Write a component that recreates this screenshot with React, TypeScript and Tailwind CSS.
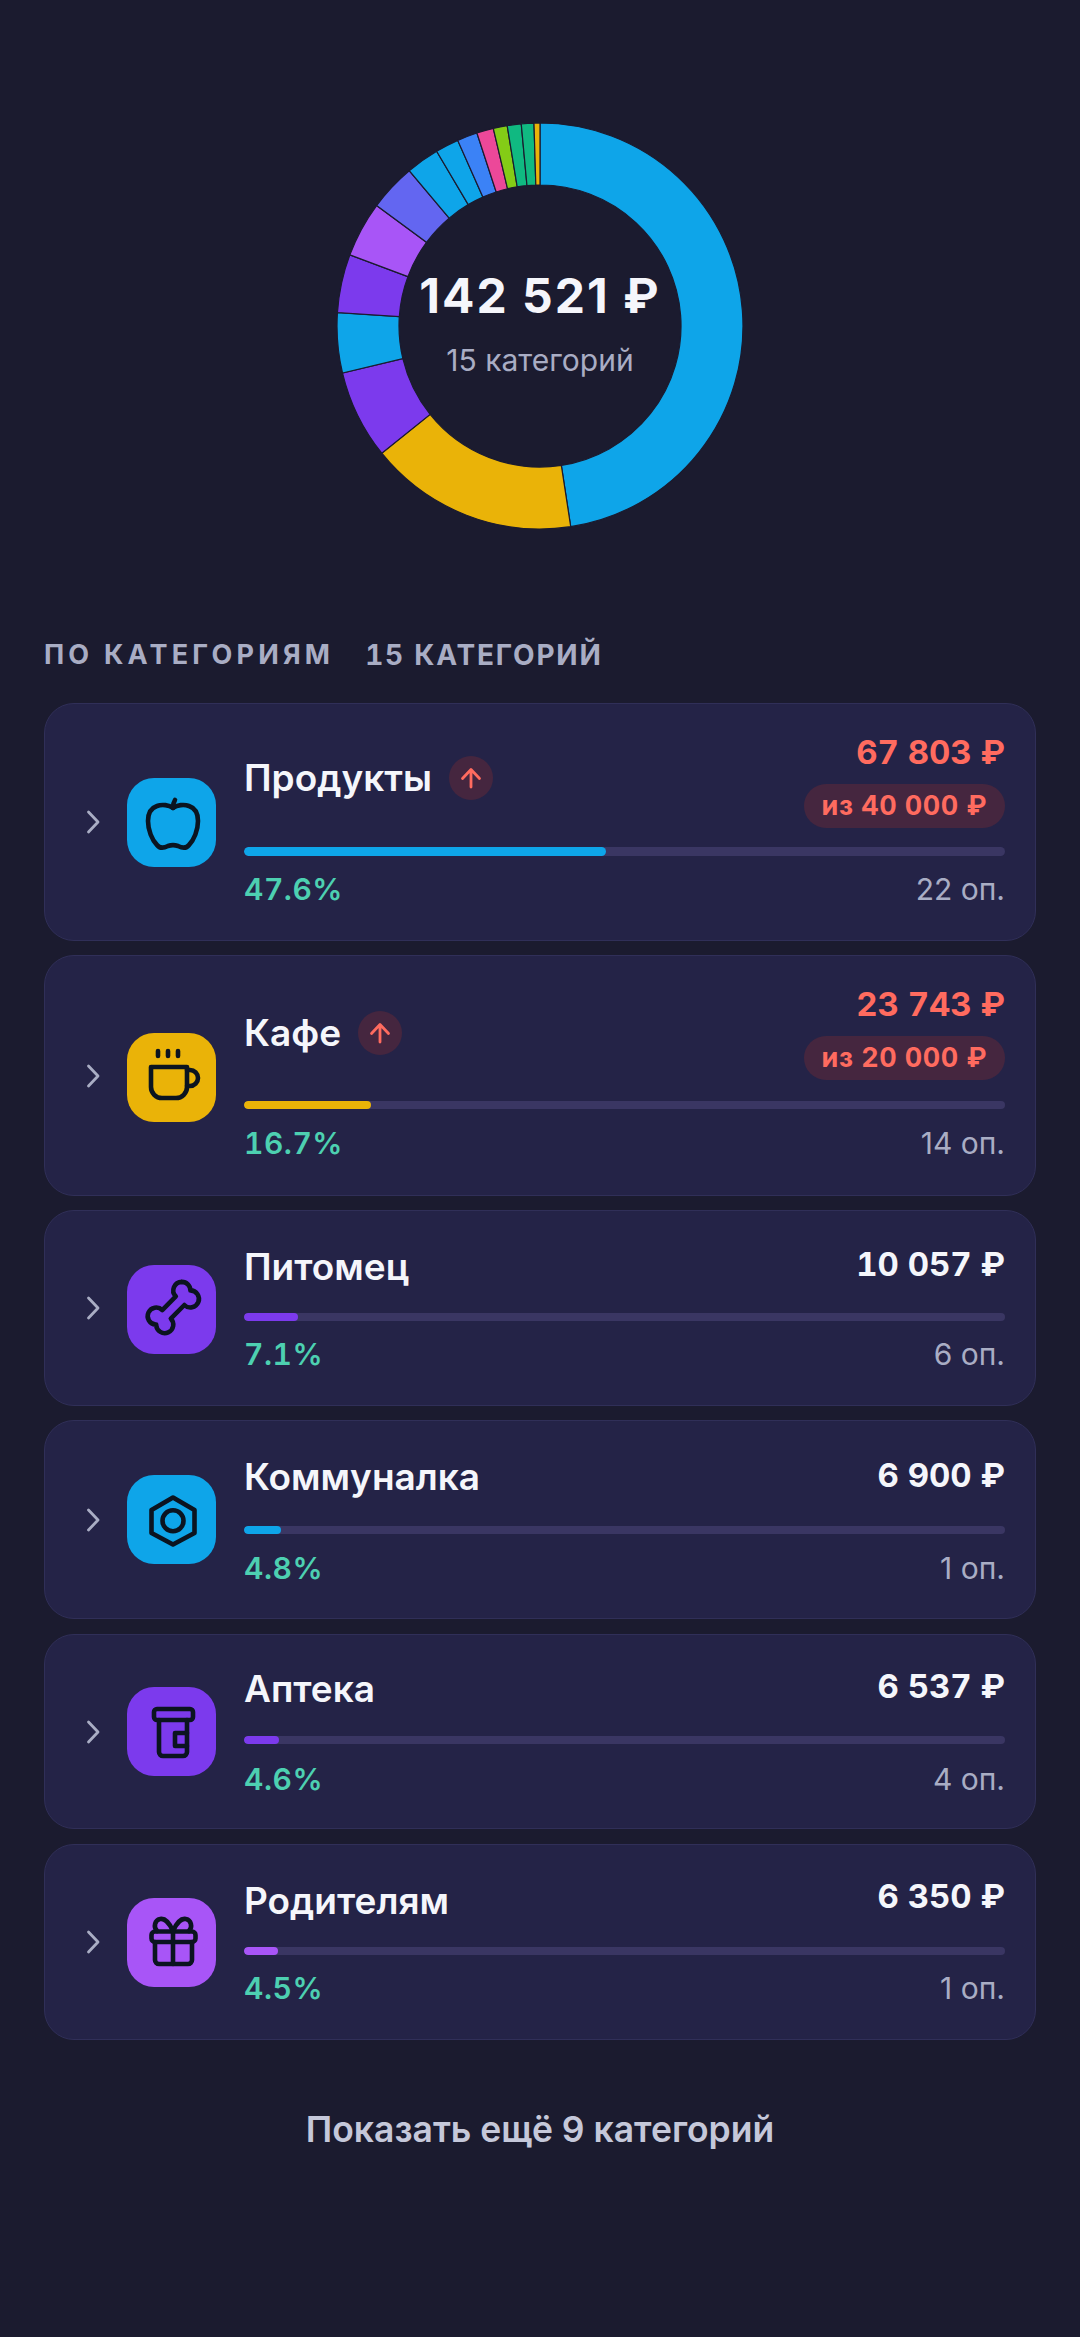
import React from "react";

const BG = "#1b1b2f";

const segs: [number, string][] = [
  [171.3, "#0ea5e9"],
  [231.2, "#eab308"],
  [256.6, "#7c3aed"],
  [273.8, "#0ea5e9"],
  [290.5, "#7c3aed"],
  [306.4, "#a855f7"],
  [319.9, "#6366f1"],
  [329.4, "#0ea5e9"],
  [336.1, "#0ea5e9"],
  [341.9, "#3b82f6"],
  [346.7, "#ec4899"],
  [350.7, "#84cc16"],
  [354.7, "#10b981"],
  [358.3, "#10b981"],
  [360, "#eab308"],
];

function arc(a0: number, a1: number, R: number, r: number, c: number) {
  const p = (a: number, q: number) => {
    const t = (a * Math.PI) / 180;
    return `${(c + q * Math.sin(t)).toFixed(2)} ${(c - q * Math.cos(t)).toFixed(2)}`;
  };
  const large = a1 - a0 > 180 ? 1 : 0;
  return `M${p(a0, R)} A${R} ${R} 0 ${large} 1 ${p(a1, R)} L${p(a1, r)} A${r} ${r} 0 ${large} 0 ${p(a0, r)} Z`;
}

function Donut() {
  let prev = 0;
  return (
    <svg width="406" height="406" viewBox="0 0 406 406" className="block">
      {segs.map(([end, color], i) => {
        const d = arc(prev, end, 203, 141, 203);
        prev = end;
        return <path key={i} d={d} fill={color} stroke={BG} strokeWidth="1.2" />;
      })}
    </svg>
  );
}

function Ico({ children }: { children: React.ReactNode }) {
  return (
    <svg width="89" height="89" viewBox="0 0 89 89" fill="none" stroke="#0b1420" strokeWidth="4.6" strokeLinecap="round" strokeLinejoin="round">
      {children}
    </svg>
  );
}

const Apple = () => (
  <Ico>
    <path d="M46 30 C50 27 57 26 62 28 C68 30 71 36 71 43 C71 52 67 62 62 67 C59 71 55 70 51 68 C48 67 44 67 41 68 C37 70 33 71 30 67 C25 62 21 52 21 43 C21 36 24 30 30 28 C35 26 42 27 46 30 Z" />
    <path d="M46 30 C46 27 46 25 48 22" />
  </Ico>
);
const Mug = () => (
  <Ico>
    <path d="M31 18 V23 M41 18 V23 M51 18 V23" />
    <path d="M24 34 H60 V54 a11 11 0 0 1 -11 11 H35 a11 11 0 0 1 -11 -11 Z" />
    <path d="M60 37 H63 a8 8 0 0 1 0 16 H60" />
  </Ico>
);
const Bone = () => (
  <Ico>
    <g transform="translate(46.3 42.5) scale(2.85) translate(-12 -12)" strokeWidth="1.6">
      <path d="M15 3a3 3 0 0 1 3 3a3 3 0 1 1 -2.12 5.122l-4.758 4.758a3 3 0 1 1 -5.117 2.297l0 -.177l-.176 0a3 3 0 1 1 2.298 -5.115l4.758 -4.758a3 3 0 0 1 2.12 -5.122z" />
    </g>
  </Ico>
);
const Nut = () => (
  <Ico>
    <path d="M46 22.5 L67.5 35 V58 L46 69.5 L24.5 58 V35 Z" />
    <circle cx="46" cy="45.7" r="10.5" />
  </Ico>
);
const Jar = () => (
  <Ico>
    <rect x="27" y="22" width="39" height="11" rx="3" />
    <path d="M32 33 V65 a4 4 0 0 0 4 4 H56 a4 4 0 0 0 4 -4 V33" />
    <path d="M60 46 H48 V59 H60" />
  </Ico>
);
const Gift = () => (
  <Ico>
    <rect x="24.5" y="33.5" width="44" height="10.5" rx="3.5" />
    <path d="M28 44 V62 a4 4 0 0 0 4 4 H61 a4 4 0 0 0 4 -4 V44" />
    <path d="M46 33 V66" />
    <path d="M46 33 C42 24 37 20 33 21 C28 22 26 29 30 33" />
    <path d="M46 33 C50 24 55 20 59 21 C64 22 66 29 62 33" />
  </Ico>
);

type Cat = {
  name: string;
  amount: string;
  limit?: string;
  pct: string;
  ops: string;
  icon: React.ReactNode;
  iconBg: string;
  iconCls: string;
  bar: string;
  barW: string;
  over?: boolean;
  cardCls: string;
  nameCls: string;
  amtCls: string;
  barCls: string;
  opsCls: string;
  colCls: string;
};

const cats: Cat[] = [
  { name: "Продукты", amount: "67 803 ₽", limit: "из 40 000 ₽", pct: "47.6%", ops: "22 оп.", icon: <Apple />, iconBg: "bg-[#0ea5e9]", iconCls: "mt-0", bar: "bg-[#0ea5e9]", barW: "w-[47.6%]", over: true, cardCls: "mt-0", nameCls: "mt-[18px]", amtCls: "mt-0", barCls: "mt-[19px] h-[9px]", opsCls: "mt-[13px]", colCls: "pt-[26px] pb-[31px]" },
  { name: "Кафе", amount: "23 743 ₽", limit: "из 20 000 ₽", pct: "16.7%", ops: "14 оп.", icon: <Mug />, iconBg: "bg-[#eab308]", iconCls: "mt-[3px]", bar: "bg-[#eab308]", barW: "w-[16.7%]", over: true, cardCls: "mt-0", nameCls: "mt-[21px]", amtCls: "mt-0", barCls: "mt-[21px] h-[8px]", opsCls: "mt-[14px]", colCls: "pt-[26px] pb-[32px]" },
  { name: "Питомец", amount: "10 057 ₽", pct: "7.1%", ops: "6 оп.", icon: <Bone />, iconBg: "bg-[#7c3aed]", iconCls: "mt-[3px]", bar: "bg-[#7c3aed]", barW: "w-[7.1%]", cardCls: "mt-0", nameCls: "mt-0", amtCls: "mt-[5px]", barCls: "mt-[16px] h-[8px]", opsCls: "mt-[13px]", colCls: "pt-[26px] pb-[31px]" },
  { name: "Коммуналка", amount: "6 900 ₽", pct: "4.8%", ops: "1 оп.", icon: <Nut />, iconBg: "bg-[#0ea5e9]", iconCls: "mt-0", bar: "bg-[#0ea5e9]", barW: "w-[4.8%]", cardCls: "mt-0", nameCls: "mt-0", amtCls: "mt-[6px]", barCls: "mt-[19px] h-[8px]", opsCls: "mt-[14px]", colCls: "pt-[26px] pb-[30px]" },
  { name: "Аптека", amount: "6 537 ₽", pct: "4.6%", ops: "4 оп.", icon: <Jar />, iconBg: "bg-[#7c3aed]", iconCls: "mt-0", bar: "bg-[#7c3aed]", barW: "w-[4.6%]", cardCls: "mt-[1px]", nameCls: "-mt-[2px]", amtCls: "mt-[3px]", barCls: "mt-[15px] h-[8px]", opsCls: "mt-[15px]", colCls: "pt-[26px] pb-[29px]" },
  { name: "Родителям", amount: "6 350 ₽", pct: "4.5%", ops: "1 оп.", icon: <Gift />, iconBg: "bg-[#a855f7]", iconCls: "mt-0", bar: "bg-[#a855f7]", barW: "w-[4.5%]", cardCls: "mt-[1px]", nameCls: "mt-0", amtCls: "mt-[3px]", barCls: "mt-[16px] h-[8px]", opsCls: "mt-[13px]", colCls: "pt-[26px] pb-[31px]" },
];

function Card({ c }: { c: Cat }) {
  return (
    <div className={`flex items-center rounded-[30px] border border-[#302f58] bg-[#242347] pl-[41px] pr-[30px] ${c.cardCls}`}>
      <svg width="14" height="24" viewBox="0 0 14 24" fill="none" stroke="#a9adc4" strokeWidth="2.8" strokeLinecap="round" strokeLinejoin="round" className="shrink-0">
        <path d="M2.5 2 L12 12 L2.5 22" />
      </svg>
      <div className={`ml-[27px] flex h-[89px] w-[89px] shrink-0 items-center justify-center rounded-[27px] ${c.iconBg} ${c.iconCls}`}>{c.icon}</div>
      <div className={`ml-[28px] min-w-0 flex-1 ${c.colCls}`}>
        <div className="flex min-h-[60px] items-start justify-between">
          <div className={`flex h-[60px] items-center ${c.nameCls}`}>
            <span className="text-[37px] font-semibold leading-[60px] text-[#f5f6fb]">{c.name}</span>
            {c.over && (
              <span className="ml-[17px] flex h-[44px] w-[44px] items-center justify-center rounded-full bg-[#45263f]">
                <svg width="44" height="44" viewBox="0 0 44 44" fill="none" stroke="#ff6b5f" strokeWidth="2.8" strokeLinecap="round" strokeLinejoin="round">
                  <path d="M22 31 V14 M13.5 22.5 L22 13.5 L30.5 22.5" />
                </svg>
              </span>
            )}
          </div>
          <div className={`flex flex-col items-end ${c.amtCls}`}>
            <span className={`text-[33px] font-bold tabular-nums leading-[44px] ${c.over ? "text-[#ff6b5f]" : "text-[#f5f6fb]"}`}>{c.amount}</span>
            {c.limit && (
              <span className="mt-[10px] flex h-[44px] items-center rounded-full bg-[#45263f] px-[18px] text-[27px] font-bold tabular-nums tracking-[0.5px] text-[#ff6b5f]">{c.limit}</span>
            )}
          </div>
        </div>
        <div className={`w-full overflow-hidden rounded-full bg-[#3a3663] ${c.barCls}`}>
          <div className={`h-full rounded-full ${c.bar} ${c.barW}`} />
        </div>
        <div className={`flex items-center justify-between ${c.opsCls}`}>
          <span className="text-[30px] font-semibold tabular-nums leading-[40px] tracking-[0.5px] text-[#4dd0b1]">{c.pct}</span>
          <span className="text-[30px] leading-[40px] text-[#a9adc4]">{c.ops}</span>
        </div>
      </div>
    </div>
  );
}

export default function App() {
  return (
    <div className="min-h-[2337px] bg-[#1b1b2f] px-[44px] pt-[123px] font-['Inter','Noto_Sans',sans-serif]">
      <div className="relative mx-auto h-[406px] w-[406px]">
        <Donut />
        <div className="absolute inset-0 flex flex-col items-center justify-center pb-[6px]">
          <span className="text-[48px] font-bold leading-[60px] tracking-[2px] text-[#f5f6fb]">142 521 ₽</span>
          <span className="mt-[14px] text-[30px] leading-[40px] text-[#a9adc4]">15 категорий</span>
        </div>
      </div>
      <div className="mt-[106px] flex items-center">
        <span className="text-[27px] font-bold leading-[40px] tracking-[4.2px] text-[#a9adc4]">ПО КАТЕГОРИЯМ</span>
        <span className="ml-[31px] text-[28px] font-bold tabular-nums leading-[40px] tracking-[1.8px] text-[#a9adc4]">15 КАТЕГОРИЙ</span>
      </div>
      <div className="mt-[28px] flex flex-col gap-[14px]">
        {cats.map((c) => (
          <Card key={c.name} c={c} />
        ))}
      </div>
      <div className="mt-[68px] text-center text-[35.5px] font-semibold leading-[44px] text-[#c5c8da]">Показать ещё 9 категорий</div>
    </div>
  );
}
